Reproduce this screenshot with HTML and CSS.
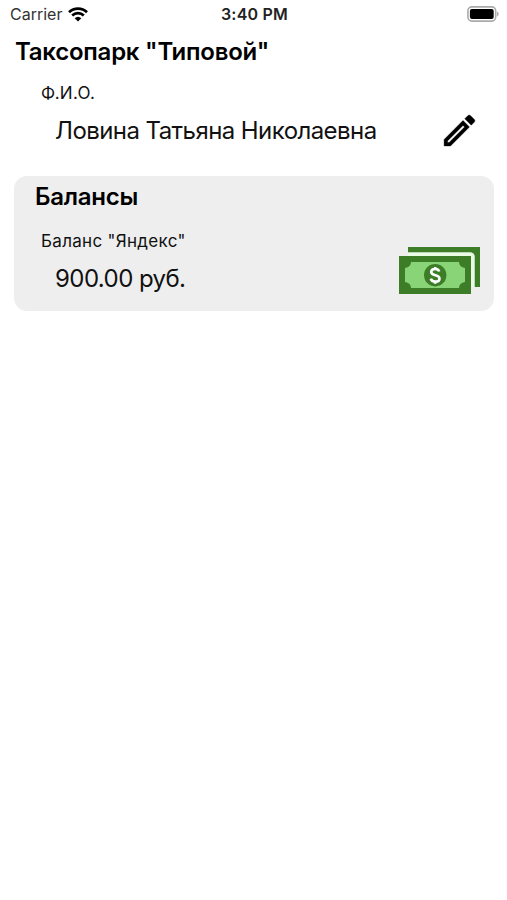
FILE: index.html
```html
<!DOCTYPE html>
<html lang="ru">
<head>
    <meta charset="UTF-8">
    <title>Таксопарк</title>
    <link rel="stylesheet" href="styles.css">
</head>
<body>

<div class="status-bar">
    <div class="carrier">
        <span>Carrier</span>
        <svg class="wifi" viewBox="0 0 20 15">
            <path d="M1 5.2a13 13 0 0 1 18 0M4.2 8.5a8.3 8.3 0 0 1 11.6 0" fill="none" stroke="#000" stroke-width="2.7"/>
            <path d="M6.7 11.2a4.8 4.8 0 0 1 6.6 0L10 14.6z"/>
        </svg>
    </div>
    <div class="time">3:40 PM</div>
    <svg class="battery" viewBox="0 0 33 16">
        <rect x="1.9" y="0.9" width="27.8" height="14.2" rx="4" fill="#fff" stroke="#aaa" stroke-width="1.6"/>
        <rect x="3.9" y="3" width="23.8" height="10" rx="2"/>
        <path d="M31 5.5q1.7.8 1.7 2.5t-1.7 2.5z" fill="#aaa"/>
    </svg>
</div>

<h1>Таксопарк "Типовой"</h1>

<div class="row profile">
    <div>
        <div class="label">Ф.И.О.</div>
        <div class="value">Ловина Татьяна Николаевна</div>
    </div>
    <svg class="edit" viewBox="0 0 24 24">
        <path d="M14.06 9l.94.94L5.92 19H5v-.92L14.06 9m3.6-6c-.25 0-.51.1-.7.29l-1.83 1.83 3.75 3.75 1.83-1.83c.39-.39.39-1.04 0-1.41l-2.34-2.34c-.2-.2-.45-.29-.71-.29m-3.6 3.19L3 17.25V21h3.75L17.81 9.94l-3.75-3.75z" stroke="#000" stroke-width="0.25"/>
    </svg>
</div>

<div class="card">
    <h2>Балансы</h2>
    <div class="row">
        <div>
            <div class="label">Баланс "Яндекс"</div>
            <div class="value">900.00 руб.</div>
        </div>
        <svg class="cash" viewBox="0 0 81 47">
            <path d="M9 0h72v40h-5.5V10q0-4.5-4.5-4.5H9z" fill="#3d7d27"/>
            <path d="M9 5.5h62.5q4 0 4 4V40H72V9H9z" fill="#e9fae5"/>
            <rect y="9" width="72" height="38" fill="#3d7d27"/>
            <path d="M12 15h48q0 5 6 6v14q-6 1-6 6H12q0-5-6-6V21q6-1 6-6z" fill="#8ad478"/>
            <circle cx="36.2" cy="28.2" r="11.2" fill="#3d7d27"/>
            <path d="M40.2 24.5c-.5-1.7-2-2.5-4-2.5-2.3 0-4 1.1-4 3 0 4.4 8.3 2 8.3 6.4 0 2-1.8 3.2-4.2 3.2-2.3 0-4-1-4.5-2.9M36.2 20v3M36.2 33.7v3" fill="none" stroke="#fff" stroke-width="2.6"/>
        </svg>
    </div>
</div>

</body>
</html>
```

FILE: styles.css
```css
body {
    margin: 0;
    background-color: #fff;
    color: #111;
    font-family: Inter, "Liberation Sans", sans-serif;
}

h1, h2 {
    margin: 0;
    font-size: 24px;
    line-height: 30px;
    font-weight: 600;
    letter-spacing: -0.25px;
    color: #000;
}

.status-bar {
    display: grid;
    grid-template-columns: 1fr auto 1fr;
    align-items: center;
    height: 28px;
    padding: 0 8px 0 10px;
    font-size: 16px;
}

.carrier {
    display: flex;
    align-items: center;
    gap: 6px;
    color: #333;
}

.wifi {
    width: 20px;
    height: 15px;
}

.time {
    font-weight: 600;
    letter-spacing: 0.2px;
    color: #222;
}

.battery {
    width: 33px;
    height: 16px;
    justify-self: end;
}

h1 {
    padding: 9px 15px 0;
}

.row {
    display: flex;
    justify-content: space-between;
}

.profile {
    padding: 15px 27px 0 41px;
    height: 94px;
}

.label {
    font-size: 17px;
    line-height: 22px;
    letter-spacing: 0.3px;
}

.value {
    margin-top: 12px;
    padding-left: 14px;
    font-size: 24px;
    line-height: 30px;
    letter-spacing: -0.57px;
    white-space: nowrap;
}

.edit {
    width: 41px;
    height: 41px;
    margin-top: 28px;
}

.card {
    box-sizing: border-box;
    height: 135px;
    margin: 0 13px 0 14px;
    padding: 6px 14px 0 21px;
    border-radius: 13px;
    background-color: #eee;
}

.card .row {
    padding: 18px 0 0 6px;
}

.cash {
    width: 81px;
    height: 47px;
    margin-top: 17px;
}
```
